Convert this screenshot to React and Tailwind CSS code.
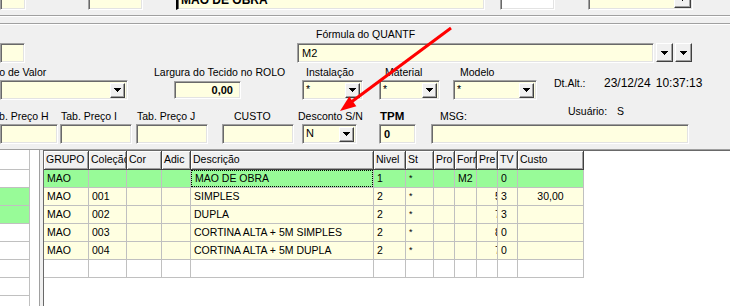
import React from "react";

// Win-classic sunken edit box
const sunken =
  "border border-t-[#a0a0a0] border-l-[#a0a0a0] border-b-white border-r-white shadow-[inset_1px_1px_0_#696969,inset_-1px_-1px_0_#e3e3e3]";

const raised =
  "bg-[#f0f0f0] border border-t-white border-l-white border-b-[#404040] border-r-[#404040] shadow-[inset_-1px_-1px_0_#a0a0a0]";

const Arrow = () => (
  <svg width="7" height="4" viewBox="0 0 7 4" shapeRendering="crispEdges">
    <polygon points="0,0 7,0 3.5,4" fill="#000" />
  </svg>
);

const DropBtn = ({ className = "" }) => (
  <div className={`${raised} flex items-center justify-center shrink-0 ${className}`}>
    <Arrow />
  </div>
);

const Field = ({ className = "", children }) => (
  <div className={`${sunken} bg-[#ffffe1] flex items-center px-[4px] shrink-0 ${className}`}>
    {children}
  </div>
);

const Combo = ({ className = "", value }) => (
  <div className={`${sunken} bg-[#ffffe1] h-[20px] flex items-center pr-[2px] shrink-0 ${className}`}>
    <span className="flex-1 self-start pl-[3px] pt-[2px] leading-[12px]">{value}</span>
    <DropBtn className="w-[15px] h-[15px]" />
  </div>
);

const cols = [
  { title: "GRUPO", w: "w-[45px]" },
  { title: "Coleção", w: "w-[38px]" },
  { title: "Cor", w: "w-[35px]" },
  { title: "Adic", w: "w-[29px]" },
  { title: "Descrição", w: "w-[183px]" },
  { title: "Nivel", w: "w-[32px]" },
  { title: "St", w: "w-[28px]" },
  { title: "Pro", w: "w-[21px]" },
  { title: "Forn", w: "w-[22px]" },
  { title: "Pre", w: "w-[21px]" },
  { title: "TV", w: "w-[20px]" },
  { title: "Custo", w: "w-[66px]" },
];

const rows = [
  ["MAO", "", "", "", "MAO DE OBRA", "1", "*", "", "M2", "", "0", ""],
  ["MAO", "001", "", "", "SIMPLES", "2", "*", "", "", "5", "3", "30,00"],
  ["MAO", "002", "", "", "DUPLA", "2", "*", "", "", "7", "3", ""],
  ["MAO", "003", "", "", "CORTINA ALTA + 5M SIMPLES", "2", "*", "", "", "8", "0", ""],
  ["MAO", "004", "", "", "CORTINA ALTA + 5M DUPLA", "2", "*", "", "", "7", "0", ""],
];

export default function App() {
  return (
    <div className="relative w-[730px] h-[306px] overflow-hidden bg-[#f0f0f0] text-black text-[10.5px] font-['Liberation_Sans',Arial,sans-serif]">
      {/* top strip, cut by the window edge */}
      <div className="flex items-end h-[10px]">
        <Field className="w-[26px] h-[22px]" />
        <Field className="w-[55px] h-[22px] ml-[62px]" />
        <div className={`${sunken} border-l-2 border-l-black bg-[#ffffe1] w-[309px] h-[22px] ml-[33px] shrink-0 pl-[3px] pt-[5px]`}>
          <span className="font-bold text-[12px] leading-[12px] block">MAO DE OBRA</span>
        </div>
        <div className={`${sunken} bg-white w-[55px] h-[22px] ml-[15px] shrink-0`} />
        <div className={`${sunken} bg-[#ffffe1] w-[105px] h-[22px] ml-[33px] shrink-0 flex items-end justify-end pr-[1px] pb-[1px]`}>
          <DropBtn className="w-[17px] h-[18px]" />
        </div>
      </div>

      {/* bevel */}
      <div className="mt-[5px] h-px bg-[#a0a0a0]" />
      <div className="h-px bg-white" />
      <div className="mt-[6px] h-px bg-[#a0a0a0]" />
      <div className="h-px bg-white" />

      {/* Fórmula */}
      <div className="h-[18px] leading-[18px] pl-[316px] whitespace-nowrap">Fórmula do QUANTF</div>
      <div className="flex h-[20px]">
        <Field className="w-[25px] h-[20px]" />
        <Field className="w-[357px] h-[20px] ml-[272px] text-[11px]">M2</Field>
        <DropBtn className="w-[17px] h-[19px] ml-[2px]" />
        <DropBtn className="w-[17px] h-[19px] ml-[2px]" />
      </div>

      {/* row 3 labels */}
      <div className="flex h-[17px] pt-[3px] leading-[13px] whitespace-nowrap">
        <div className="w-[154px] shrink-0"><span className="-ml-[15px]">Tipo de Valor</span></div>
        <div className="w-[152px] shrink-0">Largura do Tecido no ROLO</div>
        <div className="w-[79px] shrink-0">Instalação</div>
        <div className="w-[75px] shrink-0">Material</div>
        <div>Modelo</div>
      </div>
      <div className="flex h-[20px]">
        <Combo className="w-[128px]" value="" />
        <Field className="w-[67px] h-[18px] ml-[46px] justify-end pr-[7px] font-bold text-[11px] self-center">0,00</Field>
        <Combo className="w-[61px] ml-[61px]" value="*" />
        <Combo className="w-[61px] ml-[16px]" value="*" />
        <Combo className="w-[84px] ml-[13px]" value="*" />
        <div className="flex self-start -mt-[3px] ml-[17px] leading-[13px] whitespace-nowrap">
          <span className="w-[50px]">Dt.Alt.:</span>
          <span className="text-[12px]">23/12/24</span>
          <span className="text-[12px] ml-[5px]">10:37:13</span>
        </div>
      </div>

      {/* row 4 labels */}
      <div className="flex items-end h-[24px] pb-[1px] leading-[13px] whitespace-nowrap">
        <div className="w-[61px] shrink-0"><span className="-ml-[12px]">Tab. Preço H</span></div>
        <div className="w-[76px] shrink-0">Tab. Preço I</div>
        <div className="w-[97px] shrink-0">Tab. Preço J</div>
        <div className="w-[64px] shrink-0">CUSTO</div>
        <div className="w-[82px] shrink-0">Desconto S/N</div>
        <div className="w-[60px] shrink-0 font-bold text-[11.5px]">TPM</div>
        <div className="w-[128px] shrink-0">MSG:</div>
        <div className="flex mb-[5px]">
          <span className="w-[49px]">Usuário:</span>
          <span>S</span>
        </div>
      </div>
      <div className="flex h-[20px]">
        <Field className="w-[58px] h-[20px]" />
        <Field className="w-[72px] h-[20px] ml-[2px]" />
        <Field className="w-[72px] h-[20px] ml-[4px]" />
        <Field className="w-[72px] h-[20px] ml-[14px]" />
        <Combo className="w-[55px] ml-[8px] text-[11px]" value="N" />
        <Field className="w-[37px] h-[20px] ml-[22px] font-bold text-[11px]">0</Field>
        <Field className="w-[258px] h-[20px] ml-[15px]" />
      </div>

      {/* grids */}
      <div className="mt-[5px] border-t border-[#a0a0a0] flex h-[157px]">
        <div className="w-[40px] shrink-0 bg-white border-r border-[#a0a0a0]">
          <div className="w-[30px] border-r border-[#c0c0c0] h-full">
            <div className="h-[20px] border-b border-[#c0c0c0]" />
            {[false, true, true, false, false, false, false].map((g, i) => (
              <div
                key={i}
                className={`h-[18px] border-b border-[#c0c0c0] ${g ? "bg-[#98fb98]" : "bg-white"}`}
              />
            ))}
          </div>
        </div>
        <div className="w-[3px] shrink-0" />
        <div className="flex-1 bg-white border-l border-t border-[#696969]">
          <div className="flex w-fit h-[19px]">
            {cols.map((c) => (
              <div
                key={c.title}
                className={`${c.w} shrink-0 overflow-hidden whitespace-nowrap bg-[#f0f0f0] border-r border-b border-[#404040] shadow-[inset_1px_1px_0_#fff,inset_-1px_-1px_0_#a0a0a0] pl-[2px] leading-[17px]`}
              >
                {c.title}
              </div>
            ))}
          </div>
          {rows.map((r, ri) => (
            <div key={ri} className={`flex w-fit h-[18px] ${ri === 0 ? "bg-[#98fb98]" : "bg-[#ffffe1]"}`}>
              {r.map((v, ci) => (
                <div
                  key={ci}
                  className={`${cols[ci].w} shrink-0 overflow-hidden whitespace-nowrap border-r border-b border-[#c0c0c0] leading-[17px] ${
                    ci === 11 ? "text-center" : ci === 9 ? "pl-[18px]" : "pl-[3px]"
                  } ${ci === 6 ? "text-[9px] leading-[13px]" : ""}`}
                >
                  {ri === 0 && ci === 4 ? (
                    <div className="h-full border border-dotted border-black -ml-[3px] pl-[3px] leading-[15px]">{v}</div>
                  ) : (
                    v
                  )}
                </div>
              ))}
            </div>
          ))}
          <div className="flex w-fit h-[18px]">
            {cols.map((c) => (
              <div key={c.title} className={`${c.w} shrink-0 border-r border-b border-[#c0c0c0]`} />
            ))}
          </div>
        </div>
      </div>

      {/* red annotation arrow */}
      <svg className="absolute left-0 top-0 pointer-events-none" width="730" height="306">
        <line x1="451" y1="28" x2="350" y2="103" stroke="#ff0000" strokeWidth="3" />
        <polygon points="340,111 356.4,106.2 349.2,96.6" fill="#ff0000" />
      </svg>
    </div>
  );
}
